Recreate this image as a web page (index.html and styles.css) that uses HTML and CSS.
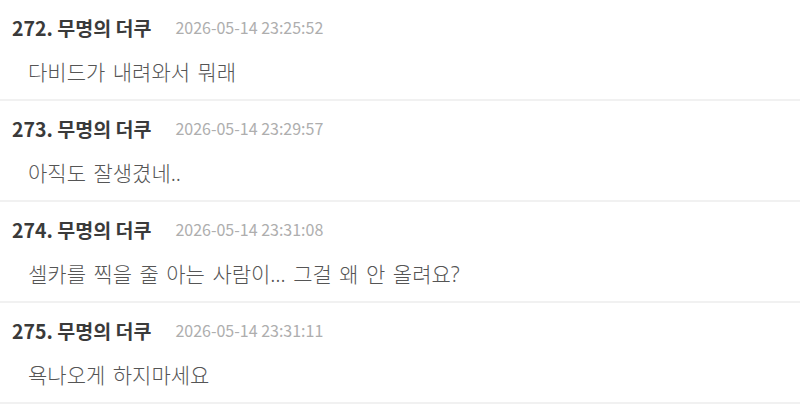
FILE: index.html
```html
<!DOCTYPE html>
<html>
<head>
    <meta charset="utf-8">
    <title>댓글</title>
    <link rel="stylesheet" href="styles.css">
</head>
<body>
    <div class="comments">
        <div class="comment">
            <div class="comment-head">
                <span class="comment-author">272. 무명의 더쿠</span>
                <span class="comment-date">2026-05-14 23:25:52</span>
            </div>
            <div class="comment-body">다비드가 내려와서 뭐래</div>
        </div>
        <div class="comment">
            <div class="comment-head">
                <span class="comment-author">273. 무명의 더쿠</span>
                <span class="comment-date">2026-05-14 23:29:57</span>
            </div>
            <div class="comment-body">아직도 잘생겼네..</div>
        </div>
        <div class="comment">
            <div class="comment-head">
                <span class="comment-author">274. 무명의 더쿠</span>
                <span class="comment-date">2026-05-14 23:31:08</span>
            </div>
            <div class="comment-body">셀카를 찍을 줄 아는 사람이… 그걸 왜 안 올려요?</div>
        </div>
        <div class="comment">
            <div class="comment-head">
                <span class="comment-author">275. 무명의 더쿠</span>
                <span class="comment-date">2026-05-14 23:31:11</span>
            </div>
            <div class="comment-body">욕나오게 하지마세요</div>
        </div>
    </div>
</body>
</html>
```

FILE: styles.css
```css
body {
    margin: 0;
    background: #fff;
    font-family: "Noto Sans CJK KR", "Noto Sans", sans-serif;
    color: #333;
}
.comment {
    padding: 16px 12px 14px;
    border-bottom: 2px solid #f1f1f1;
}
.comment-head {
    display: flex;
    align-items: center;
    height: 22px;
}
.comment-author {
    font-size: 19.5px;
    font-weight: bold;
    color: #3a3a3a;
}
.comment-date {
    margin-left: 24px;
    font-size: 16px;
    color: #aeaeae;
}
/* latin punctuation from Noto Sans so the ellipsis sits on the baseline */
.comment-body {
    margin-top: 21px;
    padding-left: 16px;
    font-family: "Noto Sans", "Noto Sans CJK KR", sans-serif;
    font-size: 21px;
    line-height: 26px;
    font-weight: 300;
    word-spacing: 2px;
    color: #555;
}
```
